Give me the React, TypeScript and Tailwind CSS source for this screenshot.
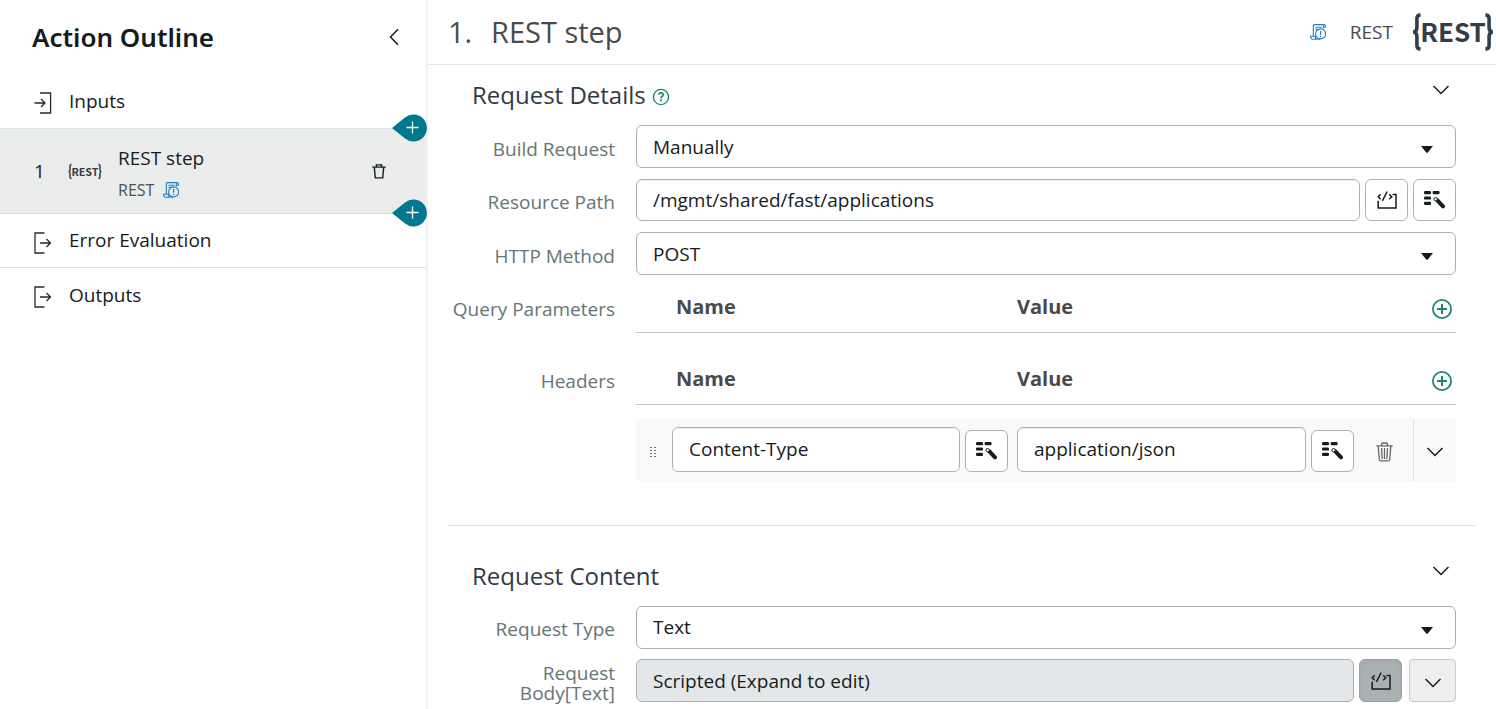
import type { ReactNode } from 'react';

const fieldBorder = 'border border-[#a9b1b3] rounded-[6px]';
const sans = "font-['Open_Sans','Noto_Sans',sans-serif]";

function ChevronDown() {
  return (
    <svg width="18" height="10" viewBox="0 0 18 10" fill="none" stroke="#161b1c" strokeWidth="1.5" aria-hidden="true">
      <path d="M1.5 1 L9 8.5 L16.5 1" />
    </svg>
  );
}

function InputsIcon() {
  return (
    <svg width="18" height="22" viewBox="0 0 18 22" fill="none" stroke="#252b2c" strokeWidth="1.3" aria-hidden="true">
      <path d="M6 1 H16.6 V21 H6 M0.5 11 H11 M7 7 L11 11 L7 15" />
    </svg>
  );
}

function OutputsIcon() {
  return (
    <svg width="18" height="22" viewBox="0 0 18 22" fill="none" stroke="#252b2c" strokeWidth="1.3" aria-hidden="true">
      <path d="M10.5 1 H1 V21 H10.5 M6 11 H16.5 M12.5 7 L16.5 11 L12.5 15" />
    </svg>
  );
}

function ScriptIcon() {
  return (
    <svg width="16" height="16" viewBox="0 0 16 16" fill="none" stroke="#1f7fc9" strokeWidth="1.1" aria-hidden="true">
      <path d="M3.3 12 V2 Q3.3 0.6 4.6 0.6 H14 Q15.5 0.6 15.4 2.2 L15.3 3.2 H13.3 V4.6 M13.3 3.2 V2 Q13.3 0.8 14.2 0.6" />
      <path d="M5.5 3.2 H11.5 M5.5 5.4 H8.5" />
      <path d="M0.5 12.3 H5.3 Q5.3 15.2 7.2 15.3 H2.2 Q0.6 15.2 0.5 12.3 Z M7 15.3 H10" />
      <circle cx="10.6" cy="9.9" r="5" />
      <path d="M10.6 7 V10.8 M10.6 11.8 V13" strokeWidth="1.3" />
    </svg>
  );
}

function CodeIcon() {
  return (
    <svg width="20" height="18" viewBox="0 0 20 18" fill="none" stroke="#161b1c" strokeWidth="1.5" aria-hidden="true">
      <path d="M1.2 9.8 V17 H19 V3.5 H15.6" />
      <path d="M3.6 3.2 L1.2 5.7 L3.6 8.2 M12.3 3.2 L14.7 5.7 L12.3 8.2 M10.2 0.5 L5.4 9.8" />
    </svg>
  );
}

function PickerIcon() {
  return (
    <svg width="21" height="18" viewBox="0 0 21 18" aria-hidden="true">
      <g fill="#161b1c">
        <rect x="0" y="0" width="7" height="3.2" rx="1.2" />
        <rect x="8.6" y="0" width="7" height="3.2" rx="1.2" />
        <rect x="0" y="5.4" width="7" height="3.2" rx="1.2" />
        <rect x="0" y="10.8" width="7" height="3.2" rx="1.2" />
      </g>
      <path d="M13.4 9.4 L19 15.4" stroke="#161b1c" strokeWidth="4" strokeLinecap="round" />
      <circle cx="11.6" cy="8.2" r="1.7" fill="#fff" stroke="#161b1c" strokeWidth="1" />
    </svg>
  );
}

function HelpIcon() {
  return (
    <svg width="18" height="18" viewBox="0 0 18 18" fill="none" stroke="#1d8673" strokeWidth="1.4" aria-hidden="true">
      <circle cx="9" cy="9" r="7.6" />
      <path d="M6.8 6.6 Q7 4.9 9 4.9 Q11.2 4.9 11.2 6.7 Q11.2 7.8 10 8.6 Q9 9.2 9 10.4" strokeWidth="1.7" />
      <path d="M9 11.6 V13.3" strokeWidth="1.8" />
    </svg>
  );
}

function PlusCircle() {
  return (
    <svg width="20" height="20" viewBox="0 0 20 20" fill="none" stroke="#1d8673" strokeWidth="1.8" aria-hidden="true">
      <circle cx="10" cy="10" r="9.1" />
      <path d="M10 5 V15 M5 10 H15" strokeWidth="2" />
    </svg>
  );
}

function StepTrash() {
  return (
    <svg width="14" height="15" viewBox="0 0 14 15" fill="none" stroke="#161b1c" strokeWidth="1.4" aria-hidden="true">
      <path d="M0.3 3.1 H13.7 M4.4 3 V0.9 H9.6 V3 M2.3 3.4 L3.3 13.9 H10.7 L11.7 3.4" />
    </svg>
  );
}

function RowTrash() {
  return (
    <svg width="17" height="20" viewBox="0 0 17 20" fill="none" stroke="#6a6664" strokeWidth="1.3" aria-hidden="true">
      <path d="M0.3 3.9 H16.7 M5.6 3.7 V2 Q5.6 1 6.6 1 H10.4 Q11.4 1 11.4 2 V3.7 M2.2 4.2 L3.3 17.7 Q3.4 18.9 4.6 18.9 H12.4 Q13.6 18.9 13.7 17.7 L14.8 4.2" />
      <path d="M5.5 6 L6.1 17 M8.5 6 V17 M11.5 6 L10.9 17" />
    </svg>
  );
}

function DragHandle() {
  return (
    <svg width="8" height="12" viewBox="0 0 8 12" fill="#6b7374" aria-hidden="true">
      {[1, 4, 7, 10].map((y) => (
        <g key={y}>
          <rect x="0" y={y} width="2" height="1" />
          <rect x="4" y={y} width="2" height="1" />
        </g>
      ))}
    </svg>
  );
}

function RestLogo({ small }: { small?: boolean }) {
  return (
    <svg
      className={small ? 'h-[17px] w-[34px]' : 'h-[40px] w-[82px]'}
      viewBox="0 0 82 40"
      role="img"
      aria-label="REST"
    >
      <g fill="none" stroke="#343d48" strokeWidth="3.6">
        <path d="M8.6 3 Q4.9 3 4.9 6.5 V15.5 Q4.9 19.6 1.3 20 Q4.9 20.4 4.9 24.5 V33.5 Q4.9 37 8.6 37" />
        <path d="M73.4 3 Q77.1 3 77.1 6.5 V15.5 Q77.1 19.6 80.7 20 Q77.1 20.4 77.1 24.5 V33.5 Q77.1 37 73.4 37" />
      </g>
      <text x="41" y="30" textAnchor="middle" fontFamily="'Noto Sans CJK JP', 'Open Sans', sans-serif" fontSize="26" fontWeight="700" fill="#343d48">REST</text>
    </svg>
  );
}

function AddStepButton({ className }: { className: string }) {
  return (
    <button type="button" aria-label="Add step" className={`absolute -right-px ${className}`}>
      <svg width="35" height="28" viewBox="0 0 35 28" className="block" aria-hidden="true">
        <path d="M0 14 L13 3.4 A13.5 13.5 0 1 1 13 24.6 Z" fill="#00788d" />
        <path d="M20.5 7.5 V19.5 M14.5 13.5 H26.5" stroke="#fff" strokeWidth="1.3" />
      </svg>
    </button>
  );
}

function IconButton({ label, children }: { label: string; children: ReactNode }) {
  return (
    <button type="button" aria-label={label} className={`${fieldBorder} flex h-[42px] w-[43px] shrink-0 items-center justify-center bg-white`}>
      {children}
    </button>
  );
}

function FormRow({ label, id, children }: { label: string; id: string; children: ReactNode }) {
  return (
    <div className="flex">
      <label htmlFor={id} className="w-[188px] shrink-0 self-center pt-1 pr-[21px] pl-8 text-right leading-5 text-[#667576]">
        {label}
      </label>
      <div className="flex min-w-0 flex-1 items-center gap-[5px]">{children}</div>
    </div>
  );
}

function SelectField({ id, options }: { id: string; options: string[] }) {
  return (
    <div className="relative flex-1">
      <select id={id} className={`${fieldBorder} block h-[43px] w-full appearance-none bg-white px-4 pt-px text-[#161b1c]`}>
        {options.map((option) => (
          <option key={option}>{option}</option>
        ))}
      </select>
      <svg width="12" height="7" viewBox="0 0 12 7" className="pointer-events-none absolute top-[21px] right-[23px]" fill="#161b1c" aria-hidden="true">
        <path d="M0 0 H12 L6.8 6.4 Q6 7 5.2 6.4 Z" />
      </svg>
    </div>
  );
}

function SectionHeading({ title, help }: { title: string; help?: boolean }) {
  return (
    <div className="flex h-[60px] items-start pl-6">
      <h2 className="flex flex-1 items-center gap-[6px] pt-3 text-2xl leading-9 text-[#303a46]">
        {title}
        {help && (
          <button type="button" aria-label="Help" className="pt-1">
            <HelpIcon />
          </button>
        )}
      </h2>
      <button type="button" aria-label={`Collapse ${title}`} className="mt-5 mr-[6px]">
        <ChevronDown />
      </button>
    </div>
  );
}

function PairTable({ label, id, rows }: { label: string; id: string; rows: { name: string; value: string }[] }) {
  return (
    <div className="flex items-start">
      <div id={id} className="flex h-[47px] w-[188px] shrink-0 items-center justify-end pr-[21px] whitespace-nowrap text-[#667576]">
        {label}
      </div>
      <div className="min-w-0 flex-1">
        <table aria-labelledby={id} className="w-full table-fixed border-collapse">
          <colgroup>
            <col className="w-9" />
            <col />
            <col />
            <col className="w-[51px]" />
            <col className="w-[43px]" />
          </colgroup>
          <thead>
            <tr className="h-[46px] border-b border-[#c3c7c8] text-left text-[#4a4a4a]">
              <td></td>
              <th scope="col" className="pb-1 pl-1 text-xl font-bold">Name</th>
              <th scope="col" className="pb-1 text-xl font-bold">Value</th>
              <td></td>
              <td className="pr-1">
                <button type="button" aria-label={`Add to ${label}`} className="ml-auto block">
                  <PlusCircle />
                </button>
              </td>
            </tr>
          </thead>
          {rows.length > 0 && (
            <tbody className="before:block before:h-[14px] before:content-['']">
              {rows.map((row) => (
                <tr key={row.name} className="h-[62px] bg-[#f9f9f9]">
                  <td className="pt-1 pl-[14px]">
                    <DragHandle />
                  </td>
                  <td className="pr-[9px]">
                    <div className="flex items-end gap-[5px]">
                      <input aria-label="Name" defaultValue={row.name} className={`${fieldBorder} h-[45px] min-w-0 flex-1 bg-white px-4 pb-[2px] text-[#161b1c] inset-shadow-2xs`} />
                      <IconButton label="Pick name">
                        <PickerIcon />
                      </IconButton>
                    </div>
                  </td>
                  <td className="pr-2">
                    <div className="flex items-end gap-[5px]">
                      <input aria-label="Value" defaultValue={row.value} className={`${fieldBorder} h-[45px] min-w-0 flex-1 bg-white px-4 pb-[2px] text-[#161b1c] inset-shadow-2xs`} />
                      <IconButton label="Pick value">
                        <PickerIcon />
                      </IconButton>
                    </div>
                  </td>
                  <td className="pt-1">
                    <button type="button" aria-label="Delete row" className="ml-[14px] block">
                      <RowTrash />
                    </button>
                  </td>
                  <td className="border-l border-[#e2e4e4] pt-1">
                    <button type="button" aria-label="Expand row" className="mx-auto block">
                      <ChevronDown />
                    </button>
                  </td>
                </tr>
              ))}
            </tbody>
          )}
        </table>
      </div>
    </div>
  );
}

function Sidebar() {
  return (
    <aside className="w-[428px] shrink-0 border-r-2 border-[#f0f1f1] text-[#161b1c]">
      <div className="flex h-[74px] items-center justify-between pr-[27px] pl-8">
        <h1 className="font-['Noto_Sans',sans-serif] text-[26px] font-semibold">Action Outline</h1>
        <button type="button" aria-label="Collapse outline">
          <svg width="10" height="18" viewBox="0 0 10 18" fill="none" stroke="#161b1c" strokeWidth="1.5" aria-hidden="true">
            <path d="M9 1.2 L1.5 9 L9 16.8" />
          </svg>
        </button>
      </div>
      <a href="#inputs" className="flex h-[54px] items-center gap-[17px] pl-[34px]">
        <span className="pt-1"><InputsIcon /></span>
        Inputs
      </a>
      <div className="relative flex h-[86px] items-center border-y border-[#e0e3e3] bg-[#ebedec] pr-10 pl-[34px]">
        <span className="w-[34px]">1</span>
        <RestLogo small />
        <a href="#step-1" className="flex flex-1 flex-col pt-[6px] pl-4">
          <span className="leading-8">REST step</span>
          <span className="flex items-center gap-[9px] text-base leading-8 text-[#4b5352]">
            REST <ScriptIcon />
          </span>
        </a>
        <button type="button" aria-label="Delete step">
          <StepTrash />
        </button>
        <AddStepButton className="-top-[15px]" />
        <AddStepButton className="-bottom-[14px]" />
      </div>
      <a href="#errors" className="flex h-[54px] items-center gap-[17px] border-b border-[#e0e3e3] pl-[34px]">
        <span className="pt-1"><OutputsIcon /></span>
        Error Evaluation
      </a>
      <a href="#outputs" className="flex h-[54px] items-center gap-[17px] pl-[34px]">
        <span className="pt-1"><OutputsIcon /></span>
        Outputs
      </a>
    </aside>
  );
}

export default function App() {
  return (
    <div className={`${sans} flex min-h-screen bg-white text-[19px]`}>
      <Sidebar />
      <main className="min-w-0 flex-1">
        <header className="flex h-[65px] items-center border-b border-[#e0e3e7] pr-[2px] pl-5 text-[#4a4a4a]">
          <span className="w-[43px] text-[29px]">1.</span>
          <h1 className="flex-1 text-[29px]">REST step</h1>
          <ScriptIcon />
          <span className="pr-[19px] pl-6">REST</span>
          <RestLogo />
        </header>

        <section className="mx-5 border-b border-[#e2e4e4] pr-5 pb-11">
          <SectionHeading title="Request Details" help />
          <div className="flex flex-col gap-[11px]">
            <FormRow label="Build Request" id="build">
              <SelectField id="build" options={['Manually', 'From cURL']} />
            </FormRow>
            <FormRow label="Resource Path" id="path">
              <input id="path" defaultValue="/mgmt/shared/fast/applications" className={`${fieldBorder} h-[42px] min-w-0 flex-1 bg-white px-4 text-[#161b1c] inset-shadow-2xs`} />
              <IconButton label="Toggle script">
                <CodeIcon />
              </IconButton>
              <IconButton label="Pick data">
                <PickerIcon />
              </IconButton>
            </FormRow>
            <FormRow label="HTTP Method" id="method">
              <SelectField id="method" options={['POST', 'GET', 'PUT', 'PATCH', 'DELETE']} />
            </FormRow>
            <PairTable label="Query Parameters" id="query" rows={[]} />
            <div className="pt-[14px]">
              <PairTable label="Headers" id="headers" rows={[{ name: 'Content-Type', value: 'application/json' }]} />
            </div>
          </div>
        </section>

        <section className="mx-5 pt-5 pr-5">
          <SectionHeading title="Request Content" />
          <div className="flex flex-col gap-[10px]">
            <FormRow label="Request Type" id="type">
              <SelectField id="type" options={['Text', 'Multipart']} />
            </FormRow>
            <FormRow label="Request Body[Text]" id="body">
              <input id="body" readOnly value="Scripted (Expand to edit)" className={`${fieldBorder} h-[43px] min-w-0 flex-1 bg-[#e3e7ea] px-4 text-[#161b1c]`} />
              <button type="button" aria-label="Toggle script" aria-pressed="true" className="flex h-[43px] w-[43px] shrink-0 items-center justify-center rounded-[6px] border border-[#98a2a4] bg-[#a9b1b3] inset-shadow-sm">
                <CodeIcon />
              </button>
              <button type="button" aria-label="Expand body" className="ml-[2px] flex h-[43px] w-[47px] shrink-0 items-center justify-center rounded-[4px] border border-[#c8cacb] bg-[#eeeeee] pt-1">
                <ChevronDown />
              </button>
            </FormRow>
          </div>
        </section>
      </main>
    </div>
  );
}
